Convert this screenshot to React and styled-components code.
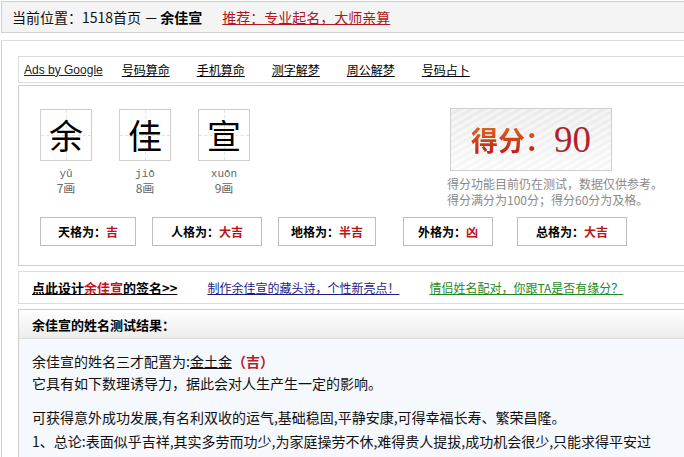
import styled, { createGlobalStyle } from "styled-components";

const GlobalStyle = createGlobalStyle`
  body {
    margin: 0;
    background: #fff;
    color: #000;
    font-family: "Noto Sans CJK SC", "Liberation Sans", sans-serif;
    font-size: 12px;
    overflow: hidden;
  }
`;

const Page = styled.div`
  width: 760px;
  padding: 1px 0 0 1px;
`;

const TopBar = styled.div`
  height: 30px;
  display: flex;
  align-items: center;
  padding-left: 10px;
  border: 1px solid #cfcfcf;
  border-right: none;
  background: #f4f4f4;
  font-size: 14px;
`;

const Crumb = styled.span`
  color: #111;
`;

const CrumbName = styled.b`
  margin-left: 2px;
  font-weight: bold;
`;

const RedLink = styled.a`
  margin-left: 20px;
  color: #b0171f;
  text-decoration: underline;
`;

const Main = styled.div`
  margin-top: 7px;
  border-top: 1px solid #ddd;
  border-left: 1px solid #cfcfcf;
  padding: 15px 0 0 16px;
`;

const AdsBar = styled.div`
  height: 25px;
  display: flex;
  align-items: center;
  padding-left: 5px;
  border: 1px solid #ddd;
  border-right: none;
`;

const AdsLabel = styled.a`
  margin-right: 19px;
  font-family: "Liberation Sans", Arial, sans-serif;
  font-size: 12px;
  color: #222;
  text-decoration: underline;
`;

const AdsLinks = styled.div`
  display: flex;
  gap: 27px;
`;

const AdsLink = styled.a`
  color: #000;
  font-size: 12px;
  text-decoration: underline;
`;

const Panel = styled.div`
  margin-top: 2px;
  border: 1px solid #cfcfcf;
  border-right: none;
  padding: 23px 0 19px 21px;
`;

const TopRow = styled.div`
  display: flex;
  align-items: flex-start;
`;

const CharRow = styled.div`
  display: flex;
  gap: 27px;
`;

const CharCard = styled.div`
  width: 52px;
  display: flex;
  flex-direction: column;
  align-items: center;
`;

const CharBox = styled.div`
  position: relative;
  width: 50px;
  height: 50px;
  border: 1px solid #cfcfcf;
  display: flex;
  align-items: center;
  justify-content: center;
  font-size: 34px;
  line-height: 1;
  color: #000;

  &::before {
    content: "";
    position: absolute;
    left: 0;
    right: 0;
    top: 50%;
    border-top: 1px dashed #e2e2e2;
  }
  &::after {
    content: "";
    position: absolute;
    top: 0;
    bottom: 0;
    left: 50%;
    border-left: 1px dashed #e2e2e2;
  }
`;

const CharGlyph = styled.span`
  position: relative;
  z-index: 1;
`;

const Pinyin = styled.div`
  margin-top: 6px;
  line-height: 14px;
  font-family: "Liberation Mono", monospace;
  font-size: 11px;
  color: #666;
`;

const Strokes = styled.div`
  line-height: 14px;
  font-size: 12px;
  color: #666;
`;

const ScoreArea = styled.div`
  margin-left: 197px;
  margin-top: -1px;
`;

const ScoreBox = styled.div`
  margin-left: 3px;
  width: 160px;
  height: 61px;
  border: 1px solid #cfcfcf;
  display: flex;
  align-items: center;
  justify-content: center;
  background:
    repeating-linear-gradient(150deg, rgba(255, 255, 255, 0.45) 0 3px, rgba(236, 236, 236, 0.25) 3px 6px),
    linear-gradient(#e9e9e9, #fcfcfc);
`;

const ScoreLabel = styled.span`
  font-size: 27px;
  font-weight: bold;
  background: linear-gradient(#e6761c, #b8121b);
  -webkit-background-clip: text;
  background-clip: text;
  color: transparent;
`;

const ScoreValue = styled.span`
  margin-left: 2px;
  font-family: "Liberation Serif", serif;
  font-size: 37px;
  color: #b1232c;
`;

const ScoreNote = styled.div`
  margin-top: 5px;
  line-height: 16px;
  font-size: 12px;
  color: #8a8a8a;
  white-space: nowrap;
`;

const NoteLine = styled.div`
  height: 16px;
`;

const GradeRow = styled.div`
  display: flex;
  margin-top: 9px;
`;

const GradeBox = styled.div`
  margin-left: ${(p) => p.$offset}px;
  width: ${(p) => p.$w}px;
  height: 27px;
  border: 1px solid #bdbdbd;
  display: flex;
  align-items: center;
  justify-content: center;
  font-size: 12px;
  font-weight: bold;
`;

const GradeValue = styled.span`
  color: #b8141c;
`;

const LinkBar = styled.div`
  margin-top: 5px;
  height: 31px;
  display: flex;
  align-items: center;
  gap: 30px;
  padding-left: 13px;
  border: 1px solid #ddd;
  border-right: none;
`;

const BarLink = styled.a`
  font-size: ${(p) => (p.$bold ? 13 : 12)}px;
  font-weight: ${(p) => (p.$bold ? "bold" : "normal")};
  color: ${(p) => p.$color};
  text-decoration: underline;
`;

const NameRed = styled.span`
  color: #c0141c;
`;

const ResultBox = styled.div`
  margin-top: 5px;
  border: 1px solid #cfcfcf;
  border-right: none;
`;

const ResultHead = styled.div`
  height: 28px;
  display: flex;
  align-items: center;
  padding-left: 13px;
  border-bottom: 1px solid #dcdcdc;
  background: linear-gradient(#ffffff, #ececec);
  font-size: 13px;
  font-weight: bold;
`;

const ResultBody = styled.div`
  padding: 11px 13px 20px;
  background: #f5f8fd;
  font-size: 14px;
  color: #111;
`;

const Para = styled.p`
  margin: ${(p) => (p.$gap ? "11px 0 0" : "0")};
  line-height: ${(p) => p.$lh}px;
  white-space: nowrap;
`;

const Under = styled.span`
  text-decoration: underline;
`;

const Luck = styled.b`
  color: #b3232a;
`;

const chars = [
  { c: "余", py: "yǔ", n: "7画" },
  { c: "佳", py: "jiō", n: "8画" },
  { c: "宣", py: "xuōn", n: "9画" },
];

const grades = [
  { k: "天格为：", v: "吉", w: 94, o: 0 },
  { k: "人格为：", v: "大吉", w: 108, o: 16 },
  { k: "地格为：", v: "半吉", w: 96, o: 16 },
  { k: "外格为：", v: "凶", w: 88, o: 27 },
  { k: "总格为：", v: "大吉", w: 108, o: 24 },
];

const adLinks = ["号码算命", "手机算命", "测字解梦", "周公解梦", "号码占卜"];

export default function App() {
  return (
    <Page>
      <GlobalStyle />
      <TopBar>
        <Crumb>当前位置：1518首页 －</Crumb>
        <CrumbName>余佳宣</CrumbName>
        <RedLink>推荐：专业起名，大师亲算</RedLink>
      </TopBar>

      <Main>
        <AdsBar>
          <AdsLabel>Ads by Google</AdsLabel>
          <AdsLinks>
            {adLinks.map((t) => (
              <AdsLink key={t}>{t}</AdsLink>
            ))}
          </AdsLinks>
        </AdsBar>

        <Panel>
          <TopRow>
            <CharRow>
              {chars.map((ch) => (
                <CharCard key={ch.c}>
                  <CharBox>
                    <CharGlyph>{ch.c}</CharGlyph>
                  </CharBox>
                  <Pinyin>{ch.py}</Pinyin>
                  <Strokes>{ch.n}</Strokes>
                </CharCard>
              ))}
            </CharRow>
            <ScoreArea>
              <ScoreBox>
                <ScoreLabel>得分：</ScoreLabel>
                <ScoreValue>90</ScoreValue>
              </ScoreBox>
              <ScoreNote>
                <NoteLine>得分功能目前仍在测试，数据仅供参考。</NoteLine>
                <NoteLine>得分满分为100分；得分60分为及格。</NoteLine>
              </ScoreNote>
            </ScoreArea>
          </TopRow>

          <GradeRow>
            {grades.map((g) => (
              <GradeBox key={g.k} $w={g.w} $offset={g.o}>
                {g.k}
                <GradeValue>{g.v}</GradeValue>
              </GradeBox>
            ))}
          </GradeRow>
        </Panel>

        <LinkBar>
          <BarLink $bold $color="#000">
            点此设计<NameRed>余佳宣</NameRed>的签名&gt;&gt;
          </BarLink>
          <BarLink $color="#1b1b86">制作余佳宣的藏头诗，个性新亮点！</BarLink>
          <BarLink $color="#1f8a1f">情侣姓名配对，你跟TA是否有缘分？</BarLink>
        </LinkBar>

        <ResultBox>
          <ResultHead>余佳宣的姓名测试结果：</ResultHead>
          <ResultBody>
            <Para $lh={22}>
              余佳宣的姓名三才配置为:<Under>金土金</Under>
              <Luck>（吉）</Luck>
              <br />
              它具有如下数理诱导力，据此会对人生产生一定的影响。
            </Para>
            <Para $gap $lh={24}>
              可获得意外成功发展,有名利双收的运气,基础稳固,平静安康,可得幸福长寿、繁荣昌隆。
              <br />
              1、总论:表面似乎吉祥,其实多劳而功少,为家庭操劳不休,难得贵人提拔,成功机会很少,只能求得平安过
            </Para>
          </ResultBody>
        </ResultBox>
      </Main>
    </Page>
  );
}
